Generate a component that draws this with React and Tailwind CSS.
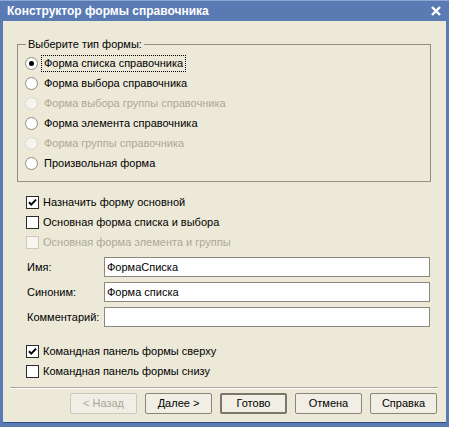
import React from "react";

function Radio({ checked, disabled, label, focused }) {
  return (
    <div className="h-[20px] flex items-center">
      <span
        className={
          "w-[13px] h-[13px] rounded-full border flex items-center justify-center shrink-0 " +
          (disabled ? "border-[#d9d6cb] bg-[#f4f3ee]" : "border-[#8f8d87] bg-white")
        }
      >
        {checked && <span className="w-[5px] h-[5px] rounded-full bg-black" />}
      </span>
      <span
        className={
          "ml-[3px] px-[2px] leading-[15px] border border-dotted " +
          (focused ? "border-black" : "border-transparent") +
          (disabled ? " text-[#aca899]" : " text-black")
        }
      >
        {label}
      </span>
    </div>
  );
}

function Check({ checked, disabled, label }) {
  return (
    <div className="h-[20px] flex items-center pl-[23px]">
      <span
        className={
          "w-[13px] h-[13px] border flex items-center justify-center shrink-0 " +
          (disabled ? "border-[#cbc8bc] bg-[#f6f5f0]" : "border-[#2b2b2b] bg-white")
        }
      >
        {checked && (
          <svg width="11" height="11" viewBox="0 0 11 11">
            <path d="M2 5.2 L4.3 7.6 L9 2.6" fill="none" stroke="#000" strokeWidth="2" />
          </svg>
        )}
      </span>
      <span className={"ml-[4px] leading-[15px] " + (disabled ? "text-[#aca899]" : "text-black")}>
        {label}
      </span>
    </div>
  );
}

function Field({ label, value }) {
  return (
    <div className="h-[20px] flex items-center">
      <span className="w-[101px] pl-[24px] shrink-0">{label}</span>
      <div className="w-[326px] h-[20px] border border-[#8c887c] bg-white flex items-center px-[2px]">
        {value}
      </div>
    </div>
  );
}

function Btn({ children, disabled, def }) {
  let cls =
    "w-[67px] h-[21px] flex items-center justify-center rounded-[2px] bg-[#f0eee5] ";
  if (disabled) cls += "border border-[#cac7bb] text-[#aca899]";
  else if (def) cls += "border-2 border-[#7a766a] text-black";
  else cls += "border border-[#8a8679] text-black";
  return <div className={cls}>{children}</div>;
}

export default function App() {
  return (
    <div className="w-[449px] h-[427px] bg-[#5a7ab3] flex flex-col font-['Liberation_Sans',sans-serif] text-[11px] text-black border-t border-[#8ea8d6]">
      <div className="h-[20px] flex items-center justify-between pl-[7px] pr-[8px]">
        <span className="text-white font-bold text-[12px] leading-[16px]">
          Конструктор формы справочника
        </span>
        <svg width="10" height="10" viewBox="0 0 10 10">
          <path d="M1 1 L9 9 M9 1 L1 9" stroke="#fff" strokeWidth="2.4" />
        </svg>
      </div>
      <div className="flex-1 mx-[3px] mb-[4px] bg-[#ece9d8] flex flex-col border-b border-[#2d4f8e]">
        <div className="relative mt-[23px] ml-[14px] w-[414px] h-[138px] border border-[#928e82] pt-[8px] pl-[7px]">
          <span className="absolute -top-[8px] left-[8px] px-[2px] bg-[#ece9d8] leading-[15px]">
            Выберите тип формы:
          </span>
          <Radio checked focused label="Форма списка справочника" />
          <Radio label="Форма выбора справочника" />
          <Radio disabled label="Форма выбора группы справочника" />
          <Radio label="Форма элемента справочника" />
          <Radio disabled label="Форма группы справочника" />
          <Radio label="Произвольная форма" />
        </div>
        <div className="mt-[10px] flex flex-col">
          <Check checked label="Назначить форму основной" />
          <Check label="Основная форма списка и выбора" />
          <Check disabled label="Основная форма элемента и группы" />
        </div>
        <div className="mt-[5px] flex flex-col gap-[5px]">
          <Field label="Имя:" value="ФормаСписка" />
          <Field label="Синоним:" value="Форма списка" />
          <Field label="Комментарий:" value="" />
        </div>
        <div className="mt-[14px] flex flex-col">
          <Check checked label="Командная панель формы сверху" />
          <Check label="Командная панель формы снизу" />
        </div>
        <div className="mt-[6px] ml-[7px] w-[428px] h-[2px] border-t border-[#aca899] border-b border-b-white" />
        <div className="mt-[4px] ml-[67px] flex gap-[8px]">
          <Btn disabled>&lt; Назад</Btn>
          <Btn>Далее &gt;</Btn>
          <Btn def>Готово</Btn>
          <Btn>Отмена</Btn>
          <Btn>Справка</Btn>
        </div>
      </div>
    </div>
  );
}
